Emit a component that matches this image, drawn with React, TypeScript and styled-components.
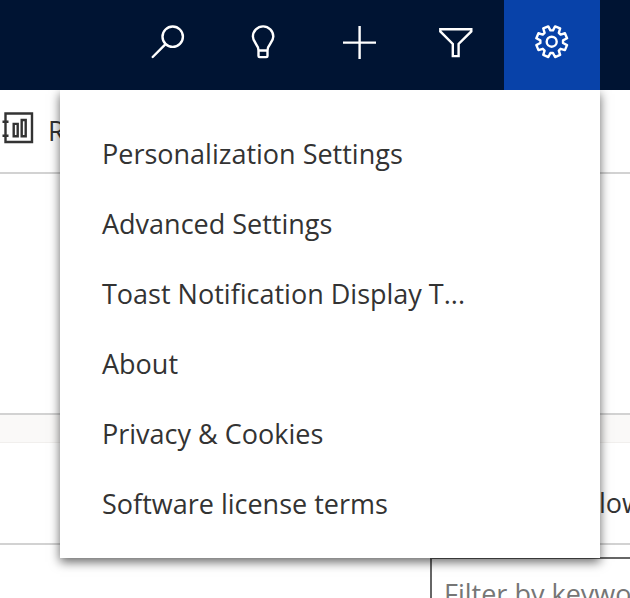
import React from "react";
import styled, { createGlobalStyle } from "styled-components";

const GlobalStyle = createGlobalStyle`
  *, *::before, *::after { box-sizing: border-box; }
  body {
    margin: 0;
    background: #fff;
    color: #333;
    font-family: "Segoe UI", "Open Sans", "Noto Sans", sans-serif;
    font-size: 27px;
    line-height: 38px;
  }
  button, input { font: inherit; color: inherit; }
`;

const Page = styled.div`
  position: relative;
  display: flex;
  flex-direction: column;
  height: 100vh;
  overflow: hidden;
`;

const TopBar = styled.header`
  position: relative;
  z-index: 3;
  flex: none;
  display: flex;
  justify-content: flex-end;
  height: 90px;
  padding-right: 30px;
  background: #001433;
`;

const BarButton = styled.button<{ $active?: boolean }>`
  display: flex;
  align-items: center;
  justify-content: center;
  width: 96px;
  padding: 0 0 6px;
  border: 0;
  background: ${(p) => (p.$active ? "#0842a9" : "transparent")};
  color: #fff;
  cursor: pointer;
`;

const Glyph = styled.svg`
  display: block;
  flex: none;
  fill: none;
  stroke: currentColor;
  stroke-width: 2.4;
`;

const Menu = styled.ul`
  position: absolute;
  z-index: 2;
  top: 90px;
  right: 30px;
  width: calc(100% - 90px);
  max-width: 540px;
  margin: 0;
  padding: 29px 0 19px;
  list-style: none;
  background: #fff;
  box-shadow: 0 4px 10px rgba(0, 0, 0, 0.6);
`;

const MenuItem = styled.button`
  display: block;
  width: 100%;
  height: 70px;
  padding: 0 42px;
  border: 0;
  background: transparent;
  text-align: left;
  white-space: nowrap;
  cursor: pointer;
`;

const CommandBar = styled.div`
  flex: none;
  display: flex;
  align-items: center;
  height: 84px;
  border-bottom: 2px solid #d2d2d2;
`;

const Command = styled.button`
  display: flex;
  align-items: flex-start;
  gap: 14px;
  padding: 0 0 0 2px;
  border: 0;
  background: transparent;
`;

const Panel = styled.section`
  flex: none;
  height: 241px;
  border-bottom: 2px solid #d2d2d2;
`;

const Divider = styled.div`
  flex: none;
  height: 28px;
  background: #faf9f8;
  border-bottom: 1px solid #f1efed;
`;

const ColumnHeader = styled.div`
  flex: none;
  display: flex;
  align-items: flex-end;
  justify-content: flex-end;
  height: 102px;
  padding-bottom: 21px;
  border-bottom: 2px solid #d2d2d2;
`;

const ColumnTitle = styled.span`
  flex: none;
  width: 31px;
  white-space: nowrap;
`;

const FilterRow = styled.div`
  flex: none;
  padding: 12px 0 0 430px;
`;

const FilterInput = styled.input`
  display: block;
  width: 320px;
  height: 72px;
  padding: 0 12px;
  border: 2px solid #666;
  background: #fff;
  outline: 0;

  &::placeholder {
    color: #767676;
    opacity: 1;
  }
`;

const SearchIcon = () => (
  <Glyph width="34" height="34" viewBox="0 0 34 34" strokeLinecap="round">
    <circle cx="21.7" cy="11.7" r="10.2" />
    <path d="M14.3 19.3 1.7 32" />
  </Glyph>
);

const BulbIcon = () => (
  <Glyph width="34" height="34" viewBox="0 0 34 34" strokeLinejoin="round">
    <path d="M11.5 25.5C11.5 19.4 5.9 17.7 5.9 11.6a10.2 10.2 0 0 1 20.4 0c0 6.1-5.8 7.8-5.8 13.9v5.4q0 1.2-1.2 1.2h-6.6q-1.2 0-1.2-1.2zM11.5 25.5h9" />
  </Glyph>
);

const PlusIcon = () => (
  <Glyph width="34" height="34" viewBox="0 0 34 34">
    <path d="M16.6 1v33M0 17.6h33" />
  </Glyph>
);

const FunnelIcon = () => (
  <Glyph width="34" height="34" viewBox="0 0 34 34">
    <path d="M1.3 4.2h31v2.2L19.6 19v12.1h-5.8V19L1.3 6.4z" />
  </Glyph>
);

const GearIcon = () => {
  const teeth = Array.from({ length: 8 }, (_, i) => 22.5 + i * 45);
  const point = (radius: number, degrees: number) => {
    const angle = (degrees * Math.PI) / 180;
    return `${(16.7 + radius * Math.cos(angle)).toFixed(2)},${(16.7 + radius * Math.sin(angle)).toFixed(2)}`;
  };
  const outline = teeth
    .map((a) => [point(11.4, a - 16), point(15.7, a - 10), point(15.7, a + 10), point(11.4, a + 16)].join(" "))
    .join(" ");
  return (
    <Glyph width="34" height="34" viewBox="0 0 34 34">
      <polygon points={outline} strokeLinejoin="round" />
      <circle cx="16.7" cy="16.7" r="5" />
    </Glyph>
  );
};

const ReportIcon = () => (
  <Glyph width="32" height="32" viewBox="0 0 32 32">
    <path d="M3.5 1.5h26.5v28.5h-26.5zM.5 9.7h6M.5 23.7h6M11.7 11.9h4v12.4h-4zM19.7 8h4v16.3h-4z" />
  </Glyph>
);

const actions = [
  { label: "Search", Icon: SearchIcon },
  { label: "Assistant", Icon: BulbIcon },
  { label: "Add", Icon: PlusIcon },
  { label: "Advanced find", Icon: FunnelIcon },
  { label: "Settings", Icon: GearIcon, active: true },
];

const entries = [
  "Personalization Settings",
  "Advanced Settings",
  "Toast Notification Display T...",
  "About",
  "Privacy & Cookies",
  "Software license terms",
];

export default function App() {
  return (
    <Page>
      <GlobalStyle />
      <TopBar>
        {actions.map(({ label, Icon, active }) => (
          <BarButton key={label} type="button" aria-label={label} aria-expanded={active} $active={active}>
            <Icon />
          </BarButton>
        ))}
      </TopBar>
      <Menu>
        {entries.map((entry) => (
          <li key={entry}>
            <MenuItem type="button">{entry}</MenuItem>
          </li>
        ))}
      </Menu>
      <CommandBar>
        <Command type="button">
          <ReportIcon />
          R
        </Command>
      </CommandBar>
      <Panel />
      <Divider />
      <ColumnHeader>
        <ColumnTitle>low</ColumnTitle>
      </ColumnHeader>
      <FilterRow>
        <FilterInput type="text" aria-label="Filter by keyword" placeholder="Filter by keyword" />
      </FilterRow>
    </Page>
  );
}
